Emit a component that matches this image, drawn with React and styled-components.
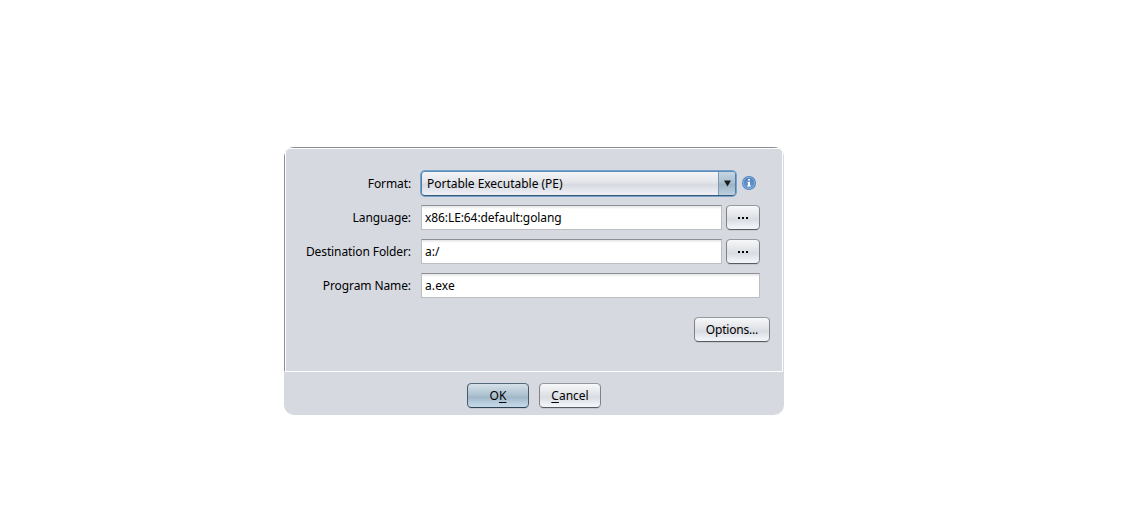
import React from 'react';
import styled, { createGlobalStyle, css } from 'styled-components';

const GlobalStyle = createGlobalStyle`
  * { box-sizing: border-box; }
  body {
    margin: 0;
    background: #fff;
    font-family: "Noto Sans", sans-serif;
    font-size: 12px;
    line-height: 16px;
    color: #000;
  }
`;

const Page = styled.main`
  height: 520px;
  padding: 147px 0 0 284px;
  overflow: hidden;
`;

const Dialog = styled.section`
  width: 500px;
  height: 268px;
  display: flex;
  flex-direction: column;
  background: #d6d9e0;
  border-radius: 10px;
  overflow: hidden;
`;

const Etched = styled.div`
  height: 225px;
  padding: 1px 1px 0 1px;
  background:
    linear-gradient(#fff, #fff) 100% 0 / 6px 5px no-repeat,
    linear-gradient(#8b8d92, #8b8d92) 0 0 / 100% 1px no-repeat,
    linear-gradient(#8b8d92, #8b8d92) 0 0 / 1px 224px no-repeat,
    linear-gradient(#8b8d92, #8b8d92) 0 223px / 2px 1px no-repeat,
    linear-gradient(#fff, #fff) 0 0 / 7px 7px no-repeat,
    #d6d9e0;
`;

const Panel = styled.div`
  height: 224px;
  padding: 22px 22px 0 0;
  border: 1px solid #fff;
  border-radius: 5px 5px 0 0;
  background: #d6d9e0;
`;

const Form = styled.form`
  display: flex;
  flex-direction: column;
  gap: 9px;
`;

const Row = styled.div`
  height: 25px;
  display: grid;
  grid-template-columns: 125px 1fr auto;
  column-gap: ${(p) => p.$gap ?? 4}px;
  align-items: center;
`;

const Label = styled.label`
  text-align: right;
  white-space: nowrap;
  letter-spacing: -0.1px;
`;

const Field = styled.div`
  height: 25px;
  margin-left: ${(p) => (p.$wide ? 10 : 6)}px;
  padding: 4px 3px;
  background: linear-gradient(#e3e4e6, #fff 3px);
  border: 1px solid #bcbec3;
  border-top-color: #8d8f94;
  letter-spacing: ${(p) => p.$spacing ?? 0}px;
`;

const Combo = styled.div`
  height: 25px;
  margin-left: 5px;
  display: flex;
  overflow: hidden;
  border: 1px solid;
  border-color: #5f8ab5 #557da5 #3f5871;
  border-radius: 4px;
  box-shadow: 0 0 0 1px #73a4d1;
  background: linear-gradient(#f4f5f7, #e2e4e9 45%, #d7dae1 55%, #eff1f6);
`;

const ComboText = styled.span`
  flex: 1;
  padding: 4px 5px;
  letter-spacing: -0.03px;
`;

const ComboArrow = styled.span`
  width: 17px;
  display: grid;
  place-items: center;
  border-left: 1px solid #8199ad;
  background: linear-gradient(#c6d6e2, #a9bfd0 45%, #9bb4c7 55%, #bdd2e1);
`;

const blue = css`
  border-color: #54697c #45596b #2f4355;
  background: linear-gradient(#d5e0e8, #b4c7d5 40%, #a2b8c9 58%, #bfd4e3 90%, #c3d8e6);
`;

const Button = styled.button`
  width: ${(p) => p.$width}px;
  height: 25px;
  padding: 0;
  display: flex;
  align-items: center;
  justify-content: center;
  border: 1px solid;
  border-color: #96989d #808288 #5a5c61;
  border-radius: 4.5px;
  background: linear-gradient(#f7f8f9, #e3e5e9 40%, #d9dce2 58%, #f0f3f8 92%);
  box-shadow: 0 1px 0 #c5c8cf;
  font: inherit;
  color: #000;
  letter-spacing: ${(p) => p.$spacing ?? 0}px;
  ${(p) => p.$primary && blue}
`;

const Caption = styled.span`
  padding-top: 1px;
`;

const Mnemonic = styled.span`
  text-decoration: underline;
  text-decoration-thickness: 1px;
  text-underline-offset: 2px;
  text-decoration-skip-ink: none;
`;

const Options = styled.div`
  display: flex;
  justify-content: flex-end;
  margin: 19px -10px 0 0;
`;

const Footer = styled.footer`
  height: 43px;
  display: flex;
  justify-content: center;
  gap: 10px;
  padding-top: 11px;
`;

const InfoSlot = styled.span`
  width: 19px;
  height: 16px;
  margin-top: -1px;
  display: flex;
`;

function Dots() {
  return (
    <svg width="12" height="3" viewBox="0 0 12 3" shapeRendering="crispEdges">
      <path d="M1 1h2v2H1zM5 1h2v2H5zM9 1h2v2H9z" />
    </svg>
  );
}

function Arrow() {
  return (
    <svg width="9" height="7" viewBox="0 0 9 7">
      <path d="M1 0.5h7L4.5 6.5z" fill="#1a1c1f" />
    </svg>
  );
}

function Info() {
  return (
    <svg width="16" height="16" viewBox="0 0 16 16">
      <defs>
        <linearGradient id="disc" x2="0" y2="1">
          <stop stopColor="#4d82bf" />
          <stop offset="1" stopColor="#6c9dd4" />
        </linearGradient>
      </defs>
      <circle cx="8" cy="8" r="7" fill="#4c80bc" />
      <circle cx="8" cy="8" r="5.7" fill="url(#disc)" stroke="#93b7de" strokeWidth="0.8" />
      <path d="M7 4h2v1.6H7zM6.4 6.8H9v3.8h.8v1H6.2v-1H7V7.8h-.6z" fill="#fff" />
    </svg>
  );
}

export default function App() {
  return (
    <>
      <GlobalStyle />
      <Page>
        <Dialog>
          <Etched>
            <Panel>
              <Form>
                <Row $gap={5}>
                  <Label>Format:</Label>
                  <Combo>
                    <ComboText>Portable Executable (PE)</ComboText>
                    <ComboArrow><Arrow /></ComboArrow>
                  </Combo>
                  <InfoSlot><Info /></InfoSlot>
                </Row>
                <Row>
                  <Label>Language:</Label>
                  <Field $spacing={-0.09}>x86:LE:64:default:golang</Field>
                  <Button type="button" $width={34}><Dots /></Button>
                </Row>
                <Row>
                  <Label>Destination Folder:</Label>
                  <Field>a:/</Field>
                  <Button type="button" $width={34}><Dots /></Button>
                </Row>
                <Row $gap={0}>
                  <Label>Program Name:</Label>
                  <Field $wide $spacing={0.1}>a.exe</Field>
                </Row>
              </Form>
              <Options>
                <Button type="button" $width={76} $spacing={-0.2}><Caption>Options...</Caption></Button>
              </Options>
            </Panel>
          </Etched>
          <Footer>
            <Button type="button" $width={62} $primary><Caption>O<Mnemonic>K</Mnemonic></Caption></Button>
            <Button type="button" $width={62}><Caption><Mnemonic>C</Mnemonic>ancel</Caption></Button>
          </Footer>
        </Dialog>
      </Page>
    </>
  );
}
